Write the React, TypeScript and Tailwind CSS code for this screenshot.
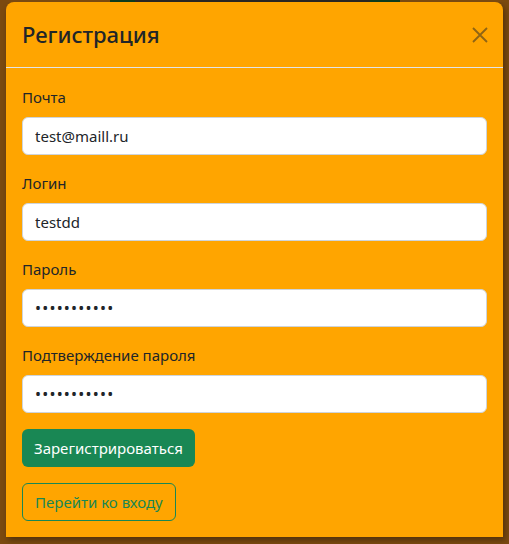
import React, { useState } from "react";

export default function App() {
  const [form, setForm] = useState({
    email: "test@maill.ru",
    login: "testdd",
    password: "12345678901",
    confirm: "12345678901",
  });

  // Handle input changes
  const handleChange = (e: React.ChangeEvent<HTMLInputElement>) => {
    setForm({ ...form, [e.target.name]: e.target.value });
  };

  const fields = [
    { name: "email", label: "Почта", type: "text" },
    { name: "login", label: "Логин", type: "text" },
    { name: "password", label: "Пароль", type: "password" },
    { name: "confirm", label: "Подтверждение пароля", type: "password" },
  ] as const;

  return (
    <div
      className="w-[509px] h-[544px] overflow-hidden bg-[#7b4a10] text-[#212529]"
      style={{ fontFamily: '"Noto Sans", "Open Sans", sans-serif' }}
    >
      {/* strip of the page behind the backdrop */}
      <div className="flex h-[2px]">
        <div className="w-[110px] bg-[#7b4a10]" />
        <div className="w-[25px] bg-[#0d3b1c]" />
        <div className="w-[235px] bg-[#2a2622]" />
        <div className="w-[30px] bg-[#0d3b1c]" />
        <div className="flex-1 bg-[#7b4a10]" />
      </div>

      <div className="ml-[6px] w-[497px] bg-[#ffa500] rounded-t-lg shadow-[2px_3px_6px_rgba(0,0,0,0.35)]">
        {/* header */}
        <div className="h-[66px] pl-4 pr-[15px] flex items-center justify-between border-b border-[#e2e4e8]">
          <h5 className="text-[22px] font-medium leading-tight">Регистрация</h5>
          <button className="w-4 h-4 opacity-50" aria-label="Close">
            <svg viewBox="0 0 16 16" className="w-4 h-4">
              <path d="M1 1L15 15M15 1L1 15" stroke="#212529" strokeWidth="1.8" />
            </svg>
          </button>
        </div>

        {/* body */}
        <form className="pt-[17px] px-4 pb-4 flex flex-col" onSubmit={(e) => e.preventDefault()}>
          {fields.map((f) => (
            <div key={f.name} className="mb-4">
              <label className="block mb-2 text-[15px] leading-6">{f.label}</label>
              <input
                type={f.type}
                name={f.name}
                value={form[f.name]}
                onChange={handleChange}
                className={`w-full h-[38px] px-3 bg-white border border-[#ced4da] rounded-md text-[#212529] focus:outline-none ${
                  f.type === "password" ? "text-[16px] tracking-[1.2px]" : "text-[15px]"
                }`}
              />
            </div>
          ))}

          <button
            type="submit"
            className="self-start h-[38px] px-3 rounded-md bg-[#198754] text-white text-[15px]"
          >
            Зарегистрироваться
          </button>
          <button
            type="button"
            className="self-start mt-4 h-[38px] px-3 rounded-md border border-[#198754] text-[#198754] text-[15px]"
          >
            Перейти ко входу
          </button>
        </form>
      </div>
    </div>
  );
}
